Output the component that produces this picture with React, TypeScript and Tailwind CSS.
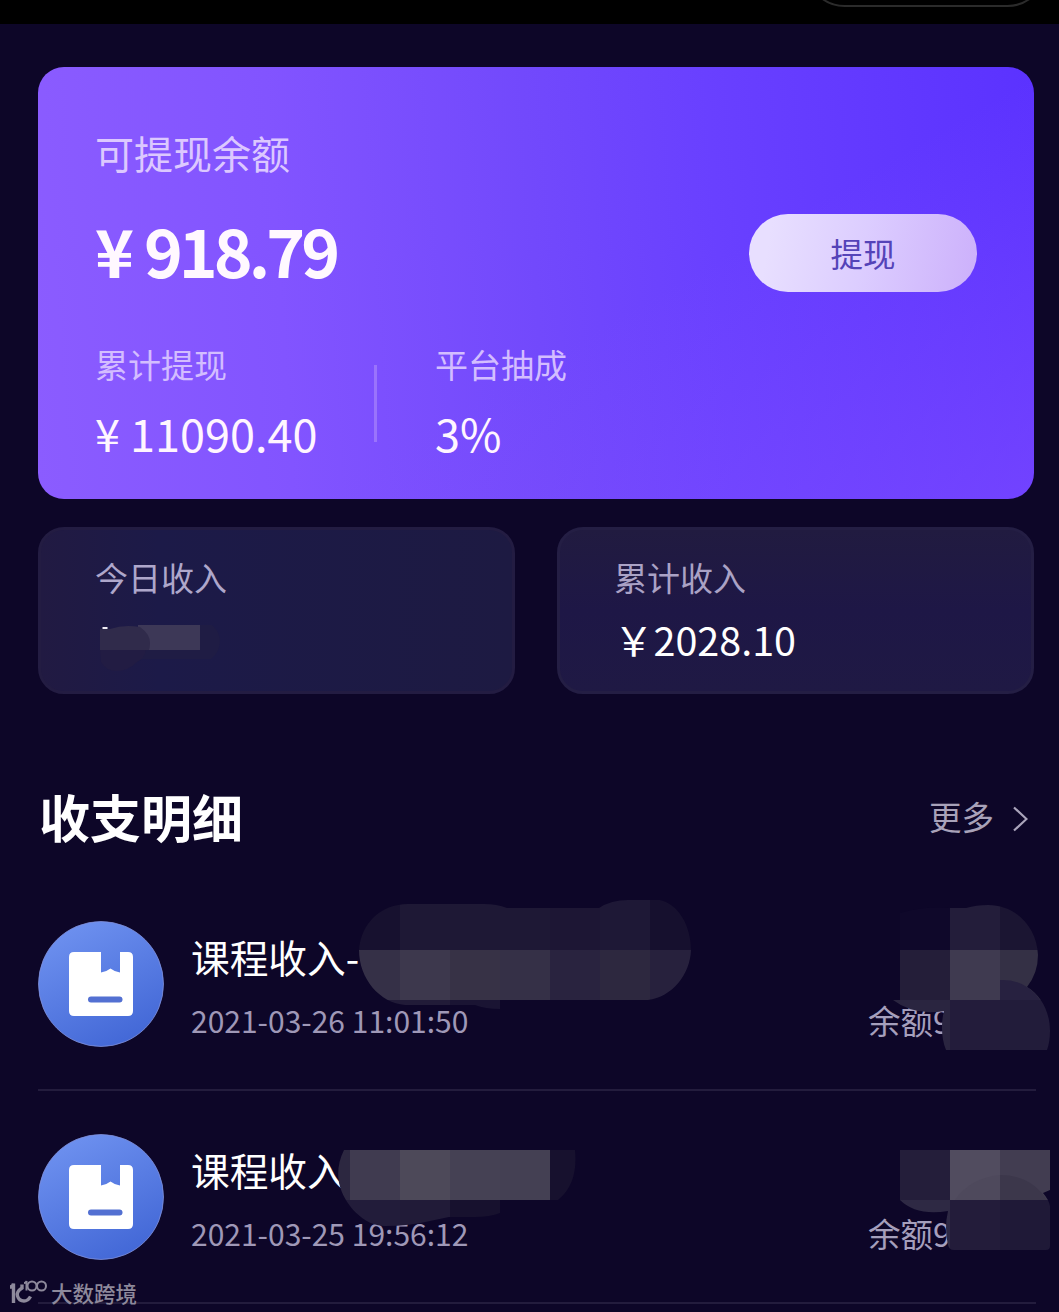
import type { ReactNode } from 'react';

const FONT = "font-['Noto_Sans_CJK_SC',sans-serif]";

interface Cell {
  x: number;
  y: number;
  w: number;
  h: number;
  fill: string;
}

interface MosaicProps {
  id: string;
  className: string;
  viewBox: string;
  outline: string;
  cells: Cell[];
  children?: ReactNode;
}

// Pixelated patch that hides private values
function Mosaic({ id, className, viewBox, outline, cells, children }: MosaicProps) {
  return (
    <svg className={`absolute ${className}`} viewBox={viewBox}>
      <clipPath id={id}>
        <path d={outline} />
      </clipPath>
      <g clipPath={`url(#${id})`}>
        {cells.map((c) => (
          <rect key={`${c.x}-${c.y}`} x={c.x} y={c.y} width={c.w} height={c.h} fill={c.fill} />
        ))}
      </g>
      {children}
    </svg>
  );
}

function CourseIcon() {
  return (
    <svg className="size-[126px] shrink-0" viewBox="0 0 126 126">
      <defs>
        <linearGradient id="courseBg" x1="0.2" y1="0" x2="0.7" y2="1">
          <stop offset="0" stopColor="#6f92f0" />
          <stop offset="1" stopColor="#4267d6" />
        </linearGradient>
      </defs>
      <circle cx="63" cy="63" r="62.5" fill="url(#courseBg)" stroke="#8091dc" strokeWidth="0.8" />
      <path
        d="M36 31H63V51.5Q68 51 72.5 47.5Q77 51 82 51.5V31H90Q95 31 95 36V90Q95 95 90 95H36Q31 95 31 90V36Q31 31 36 31Z"
        fill="#fff"
      />
      <rect x="50" y="75.5" width="34.5" height="6" rx="3" fill="#5370d2" />
    </svg>
  );
}

interface RecordRowProps {
  title: string;
  time: string;
  balance: string;
  children: ReactNode;
}

function RecordRow({ title, time, balance, children }: RecordRowProps) {
  return (
    <div className="relative flex h-[213px] w-[998px] items-start border-b-2 border-[#231c3d] pt-[43px]">
      <CourseIcon />
      <div className="ml-[27px] flex grow flex-col pt-[10px]">
        <span className="h-[50px] text-[38.7px] leading-[50px] text-white">{title}</span>
        <div className="mt-[19px] flex h-10 items-center justify-between pr-[85px]">
          <span className="text-[30px] leading-10 text-[#9f98b7]">{time}</span>
          <span className="text-[32.5px] leading-10 text-[#a59fbc]">{balance}</span>
        </div>
      </div>
      {children}
    </div>
  );
}

export default function App() {
  return (
    <div className={`relative h-[1312px] w-[1059px] overflow-hidden bg-[#0d0628] ${FONT}`}>
      {/* Status bar */}
      <div className="h-6 overflow-hidden bg-black">
        <div className="-mt-[70px] ml-[806px] h-[77px] w-[240px] rounded-full border-2 border-[#2b2b2b]" />
      </div>

      <main className="ml-[38px] w-[996px] pt-[43px]">
        {/* Balance card */}
        <section className="h-[432px] rounded-[26px] bg-[linear-gradient(150deg,transparent_58%,rgba(135,82,255,0.5)_100%),linear-gradient(86deg,#8b5cff_0%,#8254ff_25%,#7249fc_50%,#6940ff_68%,#5b32ff_100%)] pt-[60px] pr-[57px] pl-[57px]">
          <div className="h-[50px] text-[39px] leading-[50px] text-[#dcc8ff]">可提现余额</div>
          <div className="mt-[37px] flex h-[78px] items-center justify-between">
            <span className="-mt-2 text-[66px] leading-[78px] font-bold tracking-[-4px] text-[#fff8ff] [word-spacing:3px]">
              ¥ 918.79
            </span>
            <button className="h-[78px] w-[228px] rounded-full bg-[linear-gradient(100deg,#e8dfff_10%,#dccdff_50%,#ccb0fb_100%)] text-[32.5px] text-[#5443b8]">
              提现
            </button>
          </div>
          <div className="mt-[52px] flex">
            <div className="w-[279px]">
              <div className="h-10 text-[33px] leading-10 text-[#d3bdff]">累计提现</div>
              <div className="mt-[19px] h-[60px] text-[45px] leading-[60px] text-[#fff5ff]">¥ 11090.40</div>
            </div>
            <div className="mt-[21px] h-[77px] w-[3px] bg-[#9a73fc]" />
            <div className="ml-[58px]">
              <div className="h-10 text-[33px] leading-10 text-[#d3bdff]">平台抽成</div>
              <div className="mt-[19px] h-[60px] text-[45px] leading-[60px] text-[#fff5ff]">3%</div>
            </div>
          </div>
        </section>

        {/* Income cards */}
        <section className="mt-7 flex justify-between">
          <div className="relative h-[167px] w-[477px] rounded-[26px] border-[3px] border-[#231c42] bg-[linear-gradient(90deg,#211a42,#1c1a48_25%,#1d1a42)] pt-[27px] pl-[54px]">
            <div className="h-10 text-[33px] leading-10 text-[#aea7cb]">今日收入</div>
            <Mosaic
              id="today"
              className="top-[92px] left-[52px] h-[54px] w-[132px]"
              viewBox="93 622 132 54"
              outline="M93 622H225V676H93Z"
              cells={[]}
            >
              <path d="M143 625H212Q220 632 220 641Q220 652 211 659H140Z" fill="#1f1c44" />
              <path d="M100 650H146Q144 659 137 662Q128 671 117 671Q106 671 101 662Z" fill="#221c43" />
              <path d="M138 625H200V650H138Z" fill="#3d3857" />
              <path d="M100 629H110Q124 624 140 627Q150 634 150 643Q150 647 149 650H100Z" fill="#302b4b" />
              <rect x="102.500" y="627" width="5" height="2" fill="#f0edf5" />
            </Mosaic>
          </div>
          <div className="h-[167px] w-[477px] rounded-[26px] border-[3px] border-[#241e44] bg-[linear-gradient(180deg,#211b40,#1e1746_50%,#1f1944)] pt-[27px] pl-[54px]">
            <div className="h-10 text-[33px] leading-10 text-[#aaa2c5]">累计收入</div>
            <div className="mt-4 h-[52px] text-[39.5px] leading-[52px] text-white">{'\uFFE5'}2028.10</div>
          </div>
        </section>

        {/* Records */}
        <div className="mt-[87px] flex h-[70px] items-center justify-between">
          <h2 className="ml-px text-[51px] leading-[70px] font-bold text-white">收支明细</h2>
          <div className="flex items-center text-[32.5px] text-[#a8a2b9]">
            更多
            <svg className="mt-1.5 mr-1.5 ml-[19px] h-[26px] w-[15px]" viewBox="0 0 15 26" fill="none">
              <path d="M1 1.500L13.500 13L1 24.500" stroke="#aaa4bb" strokeWidth="2.200" />
            </svg>
          </div>
        </div>

        <div className="mt-[27px]">
          <RecordRow title="课程收入-" time="2021-03-26 11:01:50" balance="余额9">
            <Mosaic
              id="name1"
              className="top-[21px] left-[312px] h-[111px] w-[350px]"
              viewBox="350 899 350 111"
              outline="M359 950C361 924 380 904 408 904H484Q497 904 507 908H599Q611 900 628 900H660C678 904 691 925 691 950C690 975 672 997 648 1000H500V1009Q485 1009 475 1005H405C380 1003 359 979 359 950Z"
              cells={[
                { x: 350, y: 899, w: 50, h: 51, fill: '#17112f' },
                { x: 400, y: 899, w: 150, h: 51, fill: '#1e1835' },
                { x: 550, y: 899, w: 50, h: 51, fill: '#1d1634' },
                { x: 600, y: 899, w: 50, h: 51, fill: '#1e1836' },
                { x: 650, y: 899, w: 50, h: 51, fill: '#16102e' },
                { x: 350, y: 950, w: 50, h: 50, fill: '#353047' },
                { x: 400, y: 950, w: 50, h: 50, fill: '#3d384d' },
                { x: 450, y: 950, w: 50, h: 50, fill: '#373246' },
                { x: 500, y: 950, w: 50, h: 50, fill: '#353047' },
                { x: 550, y: 950, w: 50, h: 50, fill: '#29233f' },
                { x: 600, y: 950, w: 50, h: 50, fill: '#2d283f' },
                { x: 650, y: 950, w: 50, h: 50, fill: '#27213d' },
                { x: 350, y: 1000, w: 100, h: 10, fill: '#211b38' },
                { x: 450, y: 1000, w: 50, h: 10, fill: '#1a1433' },
              ]}
            />
            <Mosaic
              id="amount1"
              className="top-[22px] left-[852px] h-[152px] w-[162px]"
              viewBox="890 900 162 152"
              outline="M900 913Q925 906 950 908H966Q976 905 988 905C1017 905 1037 928 1038 955Q1038 973 1027 987C1041 995 1050 1012 1050 1031Q1050 1042 1047 1050H946C941 1038 941 1022 944 1011Q914 1016 893 1000H900Z"
              cells={[
                { x: 890, y: 900, w: 60, h: 50, fill: '#0f082a' },
                { x: 950, y: 900, w: 50, h: 50, fill: '#231d3a' },
                { x: 1000, y: 900, w: 50, h: 50, fill: '#1b1532' },
                { x: 890, y: 950, w: 60, h: 50, fill: '#241e39' },
                { x: 950, y: 950, w: 50, h: 50, fill: '#3f3a50' },
                { x: 1000, y: 950, w: 50, h: 50, fill: '#343045' },
                { x: 890, y: 1000, w: 60, h: 50, fill: '#2a2540' },
                { x: 950, y: 1000, w: 50, h: 50, fill: '#231c3b' },
                { x: 1000, y: 1000, w: 52, h: 50, fill: '#221c3a' },
              ]}
            >
              <path d="M1000 980Q1026 979 1040 1000H1000Z" fill="#272140" />
            </Mosaic>
          </RecordRow>

          <RecordRow title="课程收入" time="2021-03-25 19:56:12" balance="余额9">
            <Mosaic
              id="name2"
              className="top-[58px] left-[292px] h-[80px] w-[250px]"
              viewBox="330 1149 250 80"
              outline="M344 1150H575C577 1170 573 1188 558 1200H500V1213Q490 1217 475 1217H449L430 1221Q410 1226 385 1226C364 1226 344 1205 339 1183Q336 1166 344 1150Z"
              cells={[
                { x: 330, y: 1150, w: 20, h: 50, fill: '#2c2740' },
                { x: 350, y: 1150, w: 50, h: 50, fill: '#403b50' },
                { x: 400, y: 1150, w: 50, h: 50, fill: '#4d4959' },
                { x: 450, y: 1150, w: 50, h: 50, fill: '#454154' },
                { x: 500, y: 1150, w: 50, h: 50, fill: '#444053' },
                { x: 550, y: 1150, w: 30, h: 50, fill: '#17112e' },
                { x: 330, y: 1200, w: 70, h: 30, fill: '#221c3a' },
                { x: 400, y: 1200, w: 50, h: 30, fill: '#211b38' },
                { x: 450, y: 1200, w: 50, h: 30, fill: '#17112e' },
              ]}
            />
            <Mosaic
              id="amount2"
              className="top-[58px] left-[852px] h-[102px] w-[162px]"
              viewBox="890 1149 162 102"
              outline="M900 1150H1050V1190L1043 1193Q1049 1200 1050 1206V1246Q1050 1250 1046 1250H954Q949 1250 948 1245Q944 1228 948 1211Q916 1216 900 1200Z"
              cells={[
                { x: 890, y: 1150, w: 60, h: 50, fill: '#241e3a' },
                { x: 950, y: 1150, w: 50, h: 50, fill: '#514c5f' },
                { x: 1000, y: 1150, w: 50, h: 50, fill: '#423d51' },
                { x: 890, y: 1200, w: 60, h: 50, fill: '#2e2944' },
                { x: 950, y: 1200, w: 50, h: 50, fill: '#231c3a' },
                { x: 1000, y: 1200, w: 52, h: 50, fill: '#1f1937' },
              ]}
            >
              <path d="M1000 1175Q1031 1175 1047 1200H1000Z" fill="#3c374b" />
              <path d="M1000 1175Q970 1178 955 1200H1000Z" fill="#4e495c" />
            </Mosaic>
          </RecordRow>
        </div>
      </main>

      {/* Watermark */}
      <div className="absolute top-[1278px] left-[9px] flex items-center text-[#8d899b]">
        <svg className="h-[26px] w-[39px]" viewBox="0 0 39 26" fill="none" stroke="currentColor">
          <path d="M1 7Q4 7 4.500 3.500V23" strokeWidth="3.400" />
          <path d="M13 4.500V8Q7 12 8.500 16Q10 21 15 21Q19 21 21.500 16.500" strokeWidth="3.400" />
          <path d="M15 3Q17 3 17.500 1V10.500" strokeWidth="2" />
          <circle cx="23" cy="6" r="4.500" strokeWidth="2" />
          <circle cx="32.500" cy="6" r="4.500" strokeWidth="2" />
        </svg>
        <span className="ml-[3px] text-[21.5px] leading-[30px] font-medium">大数跨境</span>
      </div>
    </div>
  );
}
